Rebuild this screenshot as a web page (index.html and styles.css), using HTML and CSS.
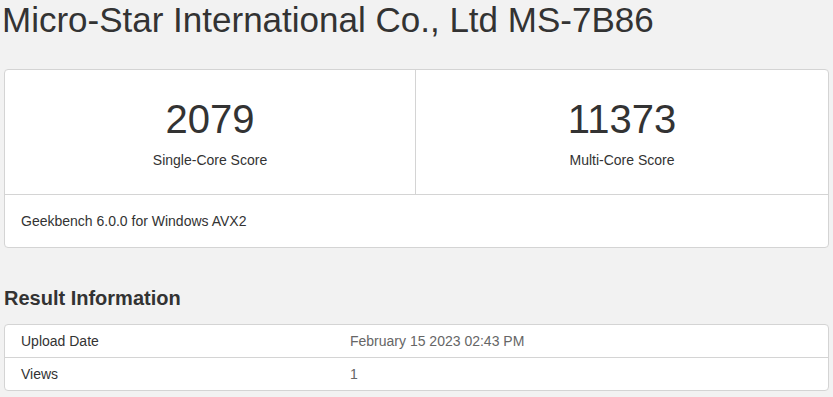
FILE: index.html
```html
<!DOCTYPE html>
<html lang="en">
<head>
  <meta charset="UTF-8" />
  <meta name="viewport" content="width=device-width, initial-scale=1.0" />
  <title>Micro-Star International Co., Ltd MS-7B86 - Geekbench</title>
  <link rel="stylesheet" href="styles.css">
</head>
<body>
  <h1 class="device">Micro-Star International Co., Ltd MS-7B86</h1>

  <div class="score-card">
    <div class="scores">
      <div class="score-cell">
        <div class="score">2079</div>
        <div class="score-label">Single-Core Score</div>
      </div>
      <div class="score-cell">
        <div class="score">11373</div>
        <div class="score-label">Multi-Core Score</div>
      </div>
    </div>
    <div class="score-footer">Geekbench 6.0.0 for Windows AVX2</div>
  </div>

  <h2 class="section-title">Result Information</h2>
  <div class="info-table">
    <div class="info-row">
      <div class="info-name">Upload Date</div>
      <div class="info-value">February 15 2023 02:43 PM</div>
    </div>
    <div class="info-row">
      <div class="info-name">Views</div>
      <div class="info-value">1</div>
    </div>
  </div>
</body>
</html>
```

FILE: styles.css
```css
body {
  margin: 0;
  padding: 0 4px;
  font-family: 'Liberation Sans', Arial, sans-serif;
  font-size: 14px;
  line-height: 20px;
  background-color: #f2f2f2;
  color: #333;
}
.device {
  margin: 1px 0 29px -2px;
  font-size: 35px;
  font-weight: normal;
  line-height: 1.1;
  color: #333;
}
.score-card {
  background: #fff;
  border: 1px solid #d4d4d4;
  border-radius: 4px;
}
.scores {
  display: grid;
  grid-template-columns: 410px 1fr;
  border-bottom: 1px solid #d4d4d4;
}
.score-cell {
  padding: 27px 0 24px;
  text-align: center;
}
.score-cell + .score-cell {
  border-left: 1px solid #d4d4d4;
}
.score {
  font-size: 40px;
  line-height: 44px;
  margin-bottom: 9px;
}
.score-footer {
  padding: 16px;
}
.section-title {
  margin: 39px 0 15px;
  font-size: 20px;
  line-height: 1.1;
  font-weight: bold;
}
.info-table {
  background: #fff;
  border: 1px solid #d4d4d4;
  border-radius: 4px;
}
.info-row {
  display: grid;
  grid-template-columns: 345px 1fr;
}
.info-row + .info-row {
  border-top: 1px solid #d4d4d4;
}
.info-name {
  padding: 6px 16px;
}
.info-value {
  padding: 6px 0;
  color: #666;
}
```
